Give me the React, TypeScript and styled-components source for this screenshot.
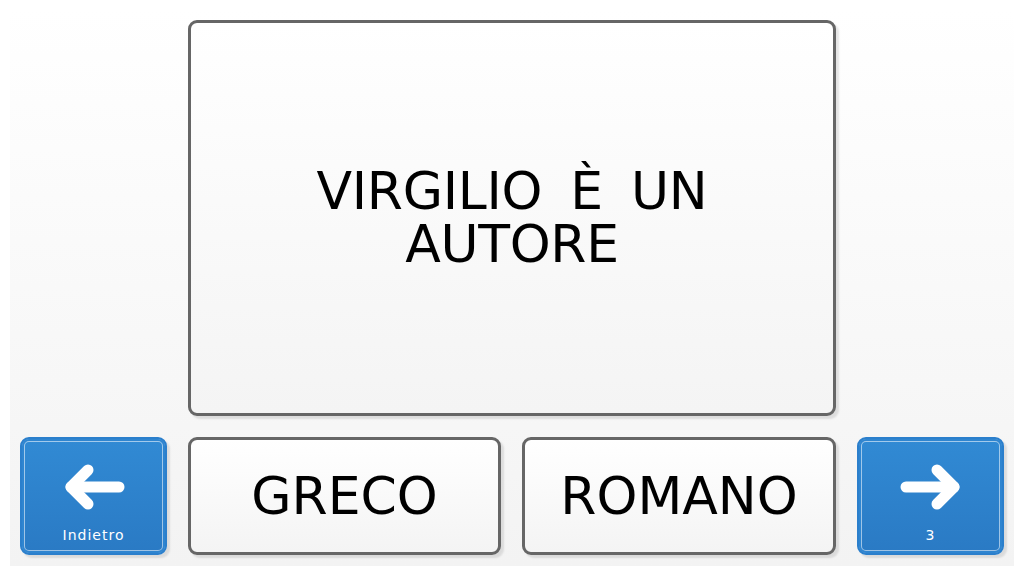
import React from "react";
import styled, { createGlobalStyle } from "styled-components";

const Global = createGlobalStyle`
  html, body { margin: 0; padding: 0; background: #ffffff; }
  body { font-family: "DejaVu Sans", Verdana, sans-serif; }
`;

const Board = styled.div`
  box-sizing: border-box;
  margin: 10px;
  width: 1004px;
  height: 556px;
  padding: 10px 10px 11px 10px;
  background: linear-gradient(to bottom, #ffffff 0%, #f3f3f3 100%);
  display: grid;
  grid-template-columns: 147px 313px 314px 147px;
  grid-template-rows: 396px 118px;
  column-gap: 21px;
  row-gap: 21px;
`;

const Tile = styled.div<{ $span?: boolean; $wide?: boolean }>`
  box-sizing: border-box;
  grid-column: ${(p) => (p.$span ? "2 / 4" : "auto")};
  border: 3px solid #666666;
  border-radius: 9px;
  background: linear-gradient(to bottom, #ffffff 0%, #f4f4f4 100%);
  box-shadow: 3px 3px 2px rgba(0, 0, 0, 0.1);
  display: flex;
  align-items: center;
  justify-content: center;
  text-align: center;
  color: #000;
  font-family: "DejaVu Sans", Verdana, sans-serif;
  font-size: 52px;
  line-height: 53px;
  word-spacing: ${(p) => (p.$wide ? "12px" : "0")};
  letter-spacing: ${(p) => (p.$wide ? "-0.3px" : "0")};
  padding: 0 20px;
`;

const NavButton = styled.div<{ $col: number }>`
  box-sizing: border-box;
  grid-column: ${(p) => p.$col};
  grid-row: 2;
  border: 2px solid #2b7fcc;
  border-radius: 9px;
  background: linear-gradient(to bottom, #318ad4 0%, #2a7ac4 100%);
  box-shadow: 3px 3px 2px rgba(0, 0, 0, 0.1), inset 0 0 0 2px #2f85d0, inset 0 0 0 3px rgba(255, 255, 255, 0.55);
  display: flex;
  flex-direction: column;
  align-items: center;
  color: #fff;
`;

const IconWrap = styled.div`
  margin-top: 25px;
  height: 46px;
  display: flex;
  align-items: center;
  justify-content: center;
`;

const NavLabel = styled.div`
  margin-top: 17px;
  font-family: "DejaVu Sans", Verdana, sans-serif;
  font-size: 14px;
  line-height: 16px;
  letter-spacing: 1px;
  color: #ffffff;
`;

const Arrow = ({ dir }: { dir: "left" | "right" }) => (
  <svg width="62" height="46" viewBox="0 0 62 46">
    <g
      transform={dir === "left" ? "" : "translate(62,0) scale(-1,1)"}
      fill="none"
      stroke="#ffffff"
      strokeWidth="11"
      strokeLinecap="round"
      strokeLinejoin="round"
    >
      <path d="M8 23 H56" />
      <path d="M25 6 L8 23 L25 40" />
    </g>
  </svg>
);

export default function App() {
  return (
    <>
      <Global />
      <Board>
        <Tile $span $wide style={{ gridRow: 1 }}>
          VIRGILIO È UN
          <br />
          AUTORE
        </Tile>
        <NavButton $col={1}>
          <IconWrap>
            <Arrow dir="left" />
          </IconWrap>
          <NavLabel>Indietro</NavLabel>
        </NavButton>
        <Tile style={{ gridRow: 2 }}>GRECO</Tile>
        <Tile style={{ gridRow: 2 }}>ROMANO</Tile>
        <NavButton $col={4}>
          <IconWrap>
            <Arrow dir="right" />
          </IconWrap>
          <NavLabel>3</NavLabel>
        </NavButton>
      </Board>
    </>
  );
}
